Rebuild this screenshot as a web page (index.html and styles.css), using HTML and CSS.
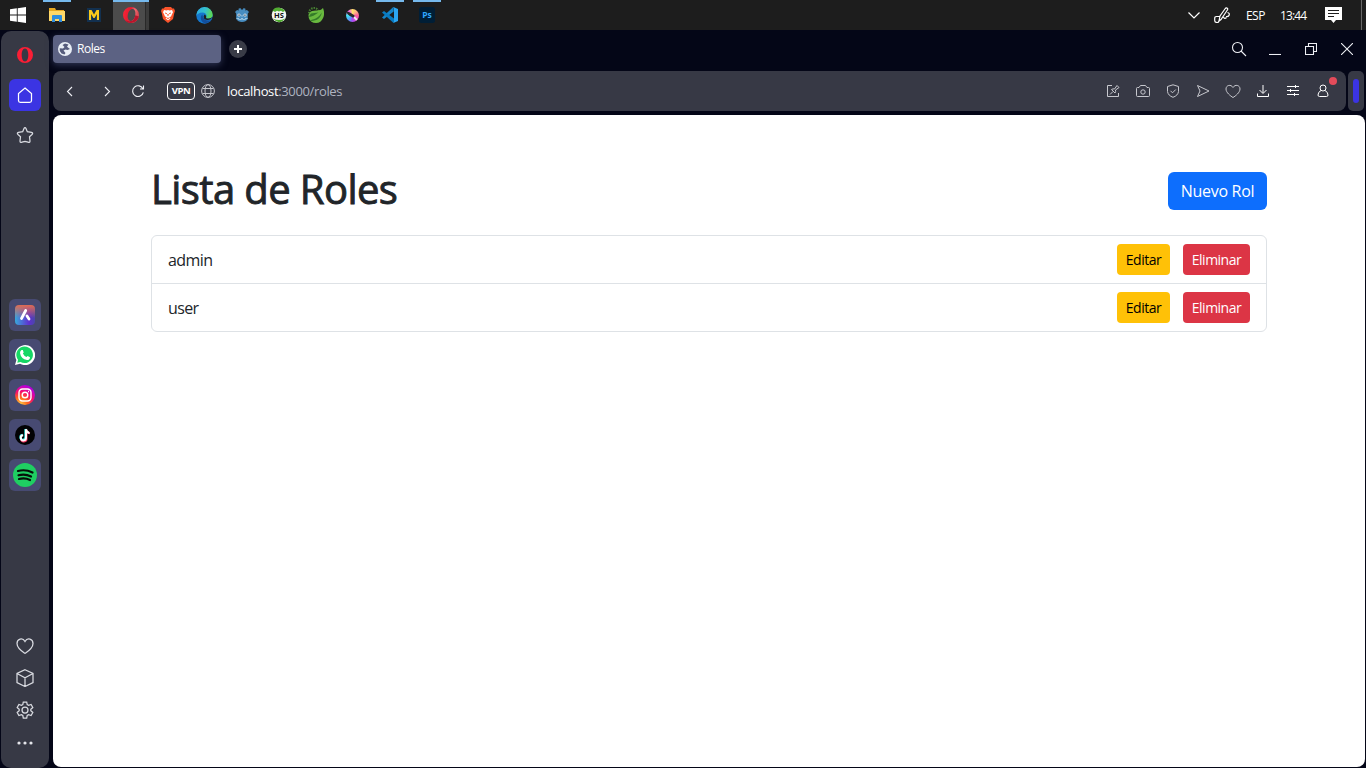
FILE: index.html
```html
<!DOCTYPE html>
<html lang="es">
<head>
<meta charset="utf-8">
<title>Roles</title>
<link rel="stylesheet" href="styles.css">
</head>
<body>
<header class="taskbar">
  <div class="task start"><svg width="16" height="16" viewBox="0 0 16 16" fill="#fff"><path d="M0 2.3 6.8 1.3V7.5H0zM7.7 1.2 16 0V7.5H7.7zM0 8.4H6.8V14.7L0 13.7zM7.7 8.4H16V16L7.7 14.8z"/></svg></div>
  <div class="task open"><svg width="16" height="14" viewBox="0 0 16 14"><path d="M0 0H6L7 2H15V4H0z" fill="#e8a921"/><path d="M0 3H16V13H0z" fill="#ffd868"/><path d="M3 14V8Q3 7 4 7H12Q13 7 13 8V14H10V11H6V14z" fill="#2e8dde"/></svg></div>
  <div class="task"><svg width="14" height="14" viewBox="0 0 14 14"><path d="M0 0H14V14H0z" fill="#12304f"/><path d="M2 12V2H4.500L7 6.500 9.500 2H12V12H9.900V6L7.600 10H6.400L4.100 6V12z" fill="#f9c91b"/></svg></div>
  <div class="task active"><svg width="16" height="16" viewBox="0 0 16 16"><defs><linearGradient id="opera" x1="0" y1="0" x2="1" y2=".25"><stop offset="0" stop-color="#ff2438"/><stop offset=".5" stop-color="#e01c30"/><stop offset=".75" stop-color="#ef6b70"/><stop offset="1" stop-color="#d94852"/></linearGradient></defs><path fill-rule="evenodd" d="M8 0A8 8 0 1 0 8 16 8 8 0 1 0 8 0M9.300 2C11.800 2 12.800 4.500 12.300 8.200S9.600 14 7.700 14C5.300 14 4.300 11 4.800 7.800S7.400 2 9.300 2" fill="url(#opera)"/><path d="M7.700 14C9.700 14 11.700 12 12.300 8.200L15.800 9.500C15 13 12 16 8 16 5 16 3 14.500 2 13Q5 15 7.700 14" fill="#b8152b"/></svg></div>
  <div class="task"><svg width="14" height="16" viewBox="0 0 14 16"><path d="M4 0H10L11.300 1.500 13 1.500 14 4 13.300 6 12 12 7 16 2 12 .7 6 0 4 1 1.500H2.700z" fill="#fb542b"/><path d="M3 3 5.500 3.400 7 3 8.500 3.400 11 3 12 5.200 10.800 7.500 10 9.500 8 10.200 9.500 11.500 7 13.300 4.500 11.500 6 10.200 4 9.500 3.200 7.500 2 5.200z" fill="#fff"/><path d="M4 5.500 6 6.200 5.700 7.200 4.200 6.500zM10 5.500 8 6.200 8.300 7.200 9.800 6.500zM6.300 7 7.700 7 7.400 9H6.600zM5.500 11.300 7 10.600 8.500 11.300 7 12z" fill="#fb542b"/></svg></div>
  <div class="task"><svg width="17" height="17" viewBox="0 0 17 17"><defs><linearGradient id="edge" x1="0" y1="0" x2="1" y2=".3"><stop offset="0" stop-color="#2ba7e8"/><stop offset=".6" stop-color="#35c1ca"/><stop offset="1" stop-color="#59d65b"/></linearGradient></defs><circle cx="8.500" cy="8.500" r="8.200" fill="#1477cd"/><path d="M.3 8.500A8.200 8.200 0 0 1 16.700 8C16.700 10.500 14.500 11.700 12.200 11.700 10 11.700 9.700 11 10.200 10.200 11.300 8 9.500 5.500 6.500 5.500 3 5.500 1 7.500.3 8.500" fill="url(#edge)"/><path d="M6.500 7.500C3 10 5.200 15.700 9.500 16.600Q13.500 16 15.400 13C11.500 14.600 6.800 13 6.500 7.500" fill="#124e9c"/><path d="M8.500 7.500Q7 9 8 11.500 10 14 14.500 12.300 16 11 16.500 10 14 12 11 11.500 9.500 11 10.200 10.200 10.700 8.500 8.500 7.500" fill="#1e1e1e"/></svg></div>
  <div class="task"><svg width="14" height="14" viewBox="0 0 14 14"><path d="M5.500 0 6 1.500H8L8.500 0 10.500.8 10.300 2.500 12 2 14 4 12.800 5.500V11Q11 14 7 14T1.200 11V5.500L0 4 2 2 3.700 2.500 3.500.8z" fill="#478cbf"/><circle cx="4" cy="7" r="1.600" fill="#dceaf3"/><circle cx="10" cy="7" r="1.600" fill="#dceaf3"/><path d="M3.400 6.400h1.300v1.300H3.400zM9.300 6.400h1.300v1.300H9.300z" fill="#34414c"/><path d="M1.500 10.200H4V11.200H6V10.200H8V11.200H10V10.200H12.500V11H10.500V12H7.500V11H6.500V12H3.500V11H1.500zM6.600 7H7.400V8.700H6.600z" fill="#b9d6e9"/></svg></div>
  <div class="task"><svg width="16" height="16" viewBox="0 0 16 16"><circle cx="8" cy="8" r="7.300" fill="#f3f6f1"/><path d="M1 5Q3 0 8 .7T15 5L13.500 4 12 5 10 3.700 8 4.500 6 3.700 4 5 2.500 4zM2 11.500Q8 14.500 14 11.500 11 15.500 8 15.300T2 11.500" fill="#52ad32"/><text x="8" y="10.900" class="hs">HS</text></svg></div>
  <div class="task"><svg width="16" height="16" viewBox="0 0 16 16"><circle cx="6" cy="6" r="5" fill="none" stroke="#477f32" stroke-width="2" stroke-dasharray="1.500 1"/><path d="M15 1Q17 6 15.300 10.500 13 16 8 16 2.500 16 .8 11 0 5.500 4 4 6 3.200 10 3.500 13.500 3.200 15 1" fill="#69b93f"/><path d="M1.500 13C6 13 10.500 11 13.700 5.500 13 11 9 13.800 3.500 14zM1.200 10Q5 9.500 10.500 5.500 6 6 3 6.500 1 8 1.200 10" fill="#347a29"/></svg></div>
  <div class="task"><div class="krita"><svg width="13" height="13" viewBox="0 0 13 13"><path d="M0 2Q4 3 8 6L9 7.500 7.500 9 6 8Q1 6 0 2" fill="#28292c"/><path d="m8 8 4 4" stroke="#eee" stroke-width="1.800"/></svg></div></div>
  <div class="task open"><svg width="16" height="16" viewBox="0 0 16 16"><path d="M11.700 0V4.500L2 12 0 10.500 11 .2" fill="#1485c9"/><path d="M0 5.400 2 4 12 11.500V16L11 15.500z" fill="#087bc1"/><path d="M11.300 0 16 2V14L11.300 16Q12 15.500 12 14.500V1.500Q12 .5 11.300 0" fill="#2ba6f2"/></svg></div>
  <div class="task open"><svg width="16" height="16" viewBox="0 0 16 16"><rect width="16" height="16" rx="2.500" fill="#001e36"/><text x="8" y="11" class="ps">Ps</text></svg></div>
  <div class="tray">
    <svg class="tray-chevron" width="14" height="14" viewBox="0 0 14 14"><path d="m1.500 4.500 5.500 5.500 5.500-5.500"/></svg>
    <svg class="tray-pen" width="16" height="16" viewBox="0 0 16 16"><path d="M5 14 6 9 11.300 1.500Q12.300.3 13.300 1.200T13 3.500L7 12.500zM5.700 9.500H2.500Q.700 9.500.700 11.500V13.500Q.700 15.500 3 15.500H3.500Q4.500 15.500 5 14M13.500 5.500Q15.700 6 15.200 8T12 9.500M9.500 10Q10.500 12.500 12.500 10.500"/></svg>
    <span class="lang">ESP</span><span class="clock">13:44</span>
    <svg class="notice" width="17" height="16" viewBox="0 0 17 16"><path fill="#fff" d="M0 0H17V13H11L8.500 16 6 13H0z"/><path stroke="#1d1d1d" d="M3 3.500H14M3 6.500H14M3 9.500H9"/></svg>
    <i class="show-desktop"></i>
  </div>
</header>
<div class="browser">
  <nav class="sidebar">
    <div class="side"><svg width="16" height="16" viewBox="0 0 16 16"><path fill="#fa1e35" fill-rule="evenodd" d="M8 0A8 8 0 1 0 8 16 8 8 0 1 0 8 0M8 1.500C10.300 1.500 11.300 4.500 11.300 8S10.300 14.500 8 14.500 4.700 11.500 4.700 8 5.700 1.500 8 1.500"/></svg></div>
    <div class="side home"><svg class="line" width="18" height="18" viewBox="0 0 18 18"><path d="M9 2 15.500 7.500V14.500Q15.500 16.300 13.700 16.300H4.300Q2.500 16.300 2.500 14.500V7.500z"/></svg></div>
    <div class="side"><svg class="line" width="18" height="18" viewBox="0 0 18 18"><path d="M9 1.500Q9.600 1.500 10 2.500L11.300 5.700 15.500 6.300Q17.500 7 16 8.500L13.500 10.800 14 15Q14 17 12 16.200L9 15.500 6 16.200Q4 17 4 15L4.500 10.800 2 8.500Q.5 7 2.500 6.300L6.700 5.700 8 2.500Q8.400 1.500 9 1.500"/></svg></div>
    <div class="apps">
      <div class="side"><div class="aria"><svg width="20" height="20" viewBox="0 0 20 20"><path d="M10.700 5.500 6.500 13.500M12 11 14 14" fill="none" stroke="#fff" stroke-width="2.800" stroke-linecap="round"/></svg></div></div>
      <div class="side"><svg width="20" height="20" viewBox="0 0 20 20"><path d="M0 20 1.400 15A10 10 0 1 1 5 18.700z" fill="#fff"/><path d="M2.300 17.700 3 14.800A8.300 8.300 0 1 1 5.500 17z" fill="#16d765"/><path d="M6.500 5 7.800 5.100 8.700 7.400 7.900 8.600Q9 11 11.500 12.100L12.600 11 15 12.200Q15 15 12 15 6 14 5 8 5 6 6.500 5" fill="#fff"/></svg></div>
      <div class="side"><div class="instagram"><svg width="14" height="14" viewBox="0 0 14 14" fill="none" stroke="#fff" stroke-width="1.400"><rect x="1" y="1" width="12" height="12" rx="3.500"/><circle cx="7" cy="7" r="2.800"/><path d="M10 3.500h1"/></svg></div></div>
      <div class="side"><svg width="20" height="20" viewBox="0 0 20 20"><circle cx="10" cy="10" r="10" fill="#020204"/><g fill="none" stroke-width="2"><path stroke="#37e5e2" d="M10.300 4V12.500A2.500 2.500 0 1 1 7.500 9.700M10.300 4Q11 7.500 14 7.600"/><path stroke="#f33460" d="M11.500 5V13.400A2.500 2.500 0 0 1 6 14M11.500 5Q12 8 15 8.300"/><path stroke="#fff" d="M11 4.200V12.800A2.600 2.600 0 1 1 8.200 10.200M11 4.200Q11.500 7.700 14.500 7.900"/></g></svg></div>
      <div class="side"><svg width="24" height="24" viewBox="0 0 24 24"><circle cx="12" cy="12" r="12" fill="#1fce62"/><path d="M5 8Q12.500 6 19.500 9.500M5.500 12.300Q12 10.500 18 13.500M6 16Q12 14.500 17 17" fill="none" stroke="#051008" stroke-width="2.200" stroke-linecap="round"/></svg></div>
    </div>
    <div class="side-bottom">
      <div class="side"><svg class="line" width="18" height="18" viewBox="0 0 18 18"><path d="M9 16.500C6 14.500 1 10.500 1 6.500 1 2 6.500 0 9 4.500 11.500 0 17 2 17 6.500 17 10.500 12 14.500 9 16.500"/></svg></div>
      <div class="side"><svg class="line" width="18" height="18" viewBox="0 0 18 18"><path d="M9 .7 17 4.500V13.500L9 17.500 1 13.500V4.500zM1 4.500 9 8.700 17 4.500M9 8.700V17.500"/></svg></div>
      <div class="side"><svg class="line" width="18" height="18" viewBox="0 0 18 18"><path d="M7.300 1H10.700L11.200 3.600 12.600 4.400 15.100 3.500 16.800 6.500 14.800 8.200V9.800L16.800 11.500 15.100 14.500 12.600 13.600 11.200 14.400 10.700 17H7.300L6.800 14.400 5.400 13.600 2.900 14.500 1.200 11.500 3.200 9.800V8.200L1.200 6.500 2.900 3.500 5.400 4.400 6.800 3.600z"/><circle cx="9" cy="9" r="3"/></svg></div>
      <div class="side"><svg width="18" height="6" viewBox="0 0 18 6" fill="#e4e5ea"><circle cx="3" cy="3" r="1.600"/><circle cx="9" cy="3" r="1.600"/><circle cx="15" cy="3" r="1.600"/></svg></div>
    </div>
  </nav>
  <div class="window">
    <div class="tabs">
      <div class="tab"><svg width="14" height="14" viewBox="0 0 14 14"><circle cx="7" cy="7" r="7" fill="#e9eef5"/><path d="M7 1.500 4.500 3 6.500 5 5 6.500 1.700 6.200Q1 9 3.500 11.500L6.500 12.500 7.500 11 5.500 8.500 7.500 7.500 9.500 8 12 7 9 4.800 10.500 2.500z" fill="#565c7c"/></svg><span class="tab-title">Roles</span></div>
      <div class="new-tab"><svg width="8" height="8" viewBox="0 0 8 8"><path d="M4 0V8M0 4H8" stroke="#fff" stroke-width="2"/></svg></div>
      <div class="controls">
        <div><svg class="line" width="16" height="16" viewBox="0 0 16 16"><circle cx="6.500" cy="6.500" r="5"/><path d="m10 10 5 5"/></svg></div>
        <div><svg class="line" width="12" height="12" viewBox="0 0 12 12"><path d="M0 11.500H12"/></svg></div>
        <div><svg class="line" width="12" height="12" viewBox="0 0 12 12"><path d="M.5 3.500H8.500V11.500H.5zM3.500 3.500V.5H11.500V8.500H8.500"/></svg></div>
        <div><svg class="line" width="12" height="12" viewBox="0 0 12 12"><path d="m0 0 12 12M12 0 0 12"/></svg></div>
      </div>
    </div>
    <div class="bar">
      <div class="toolbar">
        <svg class="line nav-back" width="16" height="16" viewBox="0 0 16 16"><path d="M10 4 5.500 8.500 10 13"/></svg>
        <svg class="line nav-next" width="16" height="16" viewBox="0 0 16 16"><path d="M6 4 10.500 8.500 6 13"/></svg>
        <svg class="line nav-load" width="14" height="14" viewBox="0 0 14 14"><path d="M12 5A5.400 5.400 0 1 0 12.300 8.300M12.500 1.500V5H9"/></svg>
        <span class="vpn">VPN</span>
        <svg class="globe" width="14" height="14" viewBox="0 0 14 14"><circle cx="7" cy="7" r="6.400"/><ellipse cx="7" cy="7" rx="3" ry="6.400"/><path d="M1.500 4.500H12.500M1.500 9.500H12.500"/></svg>
        <span class="url"><b>localhost</b>:3000/roles</span>
        <div class="tools">
          <div><svg width="14" height="14" viewBox="0 0 14 14"><path d="M6 1.500H1.500V12.500H12.500V9M4 10.500 7 7.500M5.500 5.500Q7 4.500 8.500 5L11 1.500 13 3.500 9.500 6Q10 7.500 9 9z"/></svg></div>
          <div><svg width="16" height="14" viewBox="0 0 16 14"><path d="M2.500 3.500H4L5.500 1.500H10.500L12 3.500H13.500Q14.500 3.500 14.500 4.500V11.500Q14.500 12.500 13.500 12.500H2.500Q1.500 12.500 1.500 11.500V4.500Q1.500 3.500 2.500 3.500"/><circle cx="8" cy="8" r="2.200"/></svg></div>
          <div><svg width="14" height="14" viewBox="0 0 14 14"><path d="M7 .8 12.500 2.500V7.500Q12 11.500 7 13.300 2 11.500 1.500 7.500V2.500zM4.500 6.800 6.500 8.800 9.800 5.500"/></svg></div>
          <div><svg width="14" height="14" viewBox="0 0 14 14"><path d="M1.500 1.500 13 7 1.500 12.500 4 7z"/></svg></div>
          <div><svg width="16" height="15" viewBox="0 0 16 15"><path d="M8 13.500C5.500 12 1 8.500 1 5 1 1 6 0 8 3.500 10 0 15 1 15 5 15 8.500 10.500 12 8 13.500"/></svg></div>
          <div class="bright"><svg width="14" height="14" viewBox="0 0 14 14"><path d="M7 1V9M3.500 6 7 9.500 10.500 6M1.500 9.500V12.500H12.500V9.500"/></svg></div>
          <div class="bright"><svg width="14" height="14" viewBox="0 0 14 14"><path d="M1 2.500H13M1 6.500H13M1 10.500H13M9.500 1V4M4.500 5V8M8.500 9V12"/></svg></div>
          <div class="bright profile"><svg width="14" height="14" viewBox="0 0 14 14"><circle cx="7" cy="4" r="3"/><path d="M5 6.500Q2 8 2 11 2 12.500 3.500 12.500H10.500Q12 12.500 12 11 12 8 9 6.500"/></svg><i class="dot"></i></div>
        </div>
      </div>
      <div class="side-handle"><i></i></div>
    </div>
    <main class="page">
      <div class="heading"><h1>Lista de Roles</h1><button class="btn new">Nuevo Rol</button></div>
      <ul class="list">
        <li><span>admin</span><button class="btn edit">Editar</button><button class="btn delete">Eliminar</button></li>
        <li><span>user</span><button class="btn edit">Editar</button><button class="btn delete">Eliminar</button></li>
      </ul>
    </main>
  </div>
</div>
</body>
</html>
```
FILE: styles.css
```css
* { box-sizing: border-box; }
body { margin: 0; width: 1366px; height: 768px; overflow: hidden; background: #040617; font-family: "Open Sans", "Noto Sans", sans-serif; }
svg { display: block; flex: none; }
.taskbar { height: 30px; background: #1d1d1d; display: flex; }
.task { width: 37px; height: 30px; display: flex; align-items: center; justify-content: center; }
.start { width: 38px; padding-right: 2px; }
.open { background: linear-gradient(#76b9ed, #76b9ed) 5px top / 28px 2px no-repeat; }
.active { background: linear-gradient(#76b9ed, #76b9ed) 1px top / 36px 2px no-repeat, linear-gradient(90deg, transparent 1px, #4b4b4b 1px 33px, #292929 33px 34px, #3b3b3b 34px); }
.hs { font: bold 7.5px "Open Sans", sans-serif; text-anchor: middle; fill: #111; }
.ps { font: bold 8.5px "Open Sans", sans-serif; text-anchor: middle; fill: #31a8ff; }
.krita { width: 13px; height: 13px; border-radius: 50%; overflow: hidden; background: conic-gradient(#ffe36b, #ffb183, #fb5d9b, #f04bd8, #a64df2, #53a5fc, #43e4ef, #f35ee7, #ffe36b); }
.tray { margin-left: auto; display: flex; align-items: center; color: #fff; font-size: 12px; }
.tray svg { fill: none; stroke: #fff; stroke-width: 1.2; }
.tray-chevron { margin-right: 13px; }
.tray-pen { margin-right: 16px; }
.tray .notice { stroke: none; margin-right: 19px; }
.lang { width: 34px; letter-spacing: -.55px; }
.clock { width: 45px; letter-spacing: -.9px; }
.show-desktop { width: 5px; height: 30px; border-left: 1px solid #666; }
.browser { height: 738px; display: flex; padding: 1px; gap: 4px; }
.sidebar { width: 48px; height: 737px; background: #373945; border-radius: 10px; padding: 8px; }
.side { width: 32px; height: 32px; display: flex; align-items: center; justify-content: center; margin-bottom: 8px; border-radius: 6px; }
.home { background: #3b34e3; }
.line { fill: none; stroke: #eeeff4; stroke-width: 1.25; }
.sidebar .line { stroke: #d9dbe1; }
.sidebar .home .line { stroke: #fff; }
.apps { margin-top: 148px; }
.apps .side { background: #474a72; }
.aria { width: 20px; height: 20px; border-radius: 4px; background: linear-gradient(180deg, #df6b52, transparent 65%), linear-gradient(90deg, #39a9dc, #6030cf 70%, #4a47a9); }
.instagram { width: 20px; height: 20px; border-radius: 50%; display: grid; place-items: center; background: radial-gradient(circle at 25% 100%, #ffd34b, #ff681b 30%, #f50b70 55%, #c500c9 75%, #7900ff); }
.side-bottom { margin-top: 139px; }
.side-bottom .side { margin: 0; padding-right: 1px; }
.side-bottom .side:last-child { padding: 1px 0 0; }
.window { flex: 1; min-width: 0; }
.tabs { height: 40px; display: flex; align-items: center; padding-bottom: 4px; }
.tab { width: 168px; height: 28px; border-radius: 4px; background: #5c6283; display: flex; align-items: center; padding-left: 5px; color: #fff; font-size: 12px; box-shadow: 0 2px 7px #303654; }
.tab-title { margin-left: 5px; letter-spacing: -.45px; padding-bottom: 1px; }
.new-tab { width: 18px; height: 18px; border-radius: 50%; background: #393b47; display: grid; place-items: center; margin-left: 8px; }
.controls { margin-left: auto; display: flex; }
.controls div { width: 36px; display: grid; place-items: center; }
.controls .line, .toolbar .line { stroke-width: 1.1; }
.bar { height: 40px; display: flex; gap: 2px; }
.toolbar { width: 1293px; height: 40px; background: #373945; border-radius: 8px; display: flex; align-items: center; padding: 0 8px 0 9px; }
.nav-next { margin-left: 21px; }
.nav-load { margin-left: 16px; }
.vpn { margin-left: 22px; width: 28px; height: 18px; border: 1px solid #fff; border-radius: 4px; color: #fff; font-size: 9.5px; font-weight: 700; line-height: 16px; text-align: center; letter-spacing: -.4px; }
.globe { margin-left: 6px; fill: none; stroke: #c5c6cc; }
.url { margin-left: 12px; font-size: 13px; color: #aeb3c0; letter-spacing: -.36px; white-space: nowrap; }
.url b { color: #fff; font-weight: 400; }
.tools { margin-left: auto; display: flex; }
.tools > div { width: 30px; height: 20px; display: grid; place-items: center; position: relative; }
.tools svg { fill: none; stroke: #c7c8ce; }
.tools .bright svg { stroke: #fff; }
.dot { position: absolute; width: 8px; height: 8px; border-radius: 50%; background: #e34b5a; left: 21px; top: -4px; }
.side-handle { width: 16px; height: 40px; border-radius: 5px; background: #373945; display: grid; place-items: center; }
.side-handle i { width: 6px; height: 24px; border-radius: 3px; background: #3b34e3; }
.page { height: 652px; margin-top: 4px; background: #fff; border-radius: 8px; padding: 48px 98px 0; color: #212529; }
.heading { height: 72px; display: flex; justify-content: space-between; align-items: flex-start; }
h1 { margin: 0; padding-top: 2px; font-size: 40px; line-height: 48px; font-weight: 500; letter-spacing: -.6px; -webkit-text-stroke: .9px #212529; white-space: nowrap; }
.btn { border: 0; border-radius: 4px; padding: 0; font-family: inherit; font-size: 14px; height: 31px; letter-spacing: -.5px; white-space: nowrap; }
.new { width: 99px; height: 38px; margin-top: 9px; border-radius: 6px; background: #0d6efd; color: #fff; font-size: 16px; letter-spacing: -.3px; }
.list { list-style: none; margin: 0; padding: 0; border: 1px solid #dee2e6; border-radius: 6px; }
.list li { height: 47px; display: flex; align-items: center; padding: 0 16px; font-size: 16px; letter-spacing: -.6px; }
.list li + li { height: 48px; border-top: 1px solid #dee2e6; }
.edit { width: 53px; margin-left: auto; background: #ffc107; color: #000; }
.delete { width: 67px; margin-left: 13px; background: #dc3545; color: #fff; }
```
